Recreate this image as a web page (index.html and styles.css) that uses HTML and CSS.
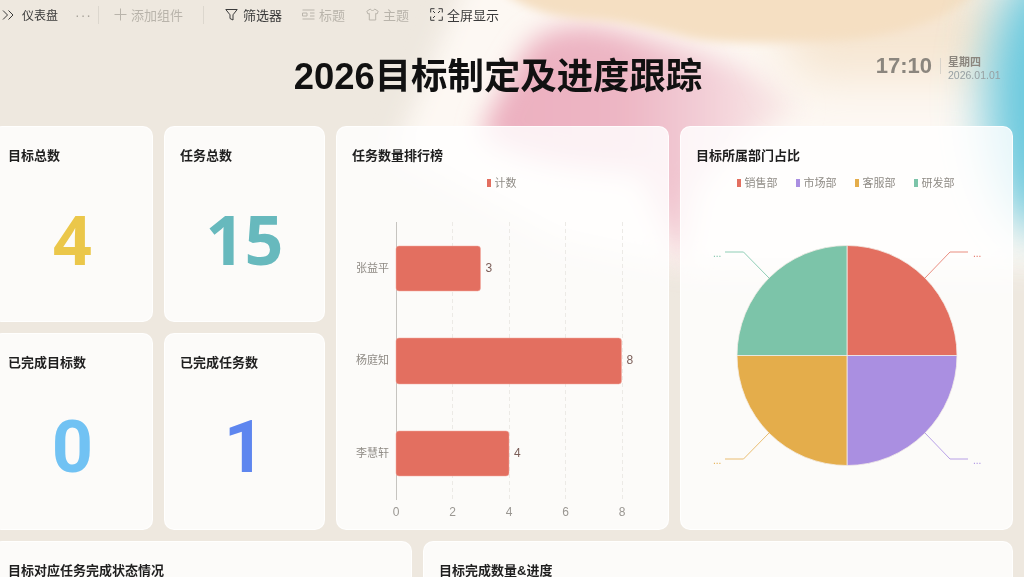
FILE: index.html
```html
<!DOCTYPE html>
<html>

<head>
    <meta name="viewport" content="width=device-width, initial-scale=1">
    <title>2026目标制定及进度跟踪</title>
    <meta charset="UTF-8">
    <link rel="stylesheet" href="styles.css">
</head>

<body>
    <!-- soft colour wash behind the whole page -->
    <svg class="wash" width="1024" height="577" viewBox="0 0 1024 577">
        <defs>
            <filter id="blur_s" x="-30%" y="-30%" width="160%" height="160%">
                <feGaussianBlur stdDeviation="5" />
            </filter>
            <filter id="blur_m" x="-30%" y="-30%" width="160%" height="160%">
                <feGaussianBlur stdDeviation="13" />
            </filter>
            <filter id="blur_l" x="-50%" y="-50%" width="200%" height="200%">
                <feGaussianBlur stdDeviation="24" />
            </filter>
            <linearGradient id="pink_fill" gradientUnits="userSpaceOnUse" x1="480" y1="0" x2="800" y2="0">
                <stop offset="0" stop-color="#ecafbf" />
                <stop offset="0.45" stop-color="#edb6c4" />
                <stop offset="0.72" stop-color="#f3d0d8" />
                <stop offset="1" stop-color="#faeeea" />
            </linearGradient>
        </defs>
        <path fill="#fdf8f3" filter="url(#blur_m)" d="M470 -30H1060V270H700L560 240 395 150Z" />
        <path fill="url(#pink_fill)" filter="url(#blur_m)"
            d="M593 26C560 26 540 30 525 50 510 75 495 100 480 135 520 165 590 170 640 175L682 270 695 195C720 150 770 125 800 110 770 70 700 50 593 26Z" />
        <path fill="#f6e6d2" filter="url(#blur_l)" d="M760 -20H1000V80H800Z" />
        <path fill="#f5dfc2" filter="url(#blur_s)"
            d="M490 -20H985C965 15 900 40 820 41 760 43 725 44 690 38 650 28 625 22 593 20 560 18 520 12 490 -20Z" />
        <ellipse fill="#6ac9de" filter="url(#blur_l)" cx="1048" cy="100" rx="62" ry="135" />
    </svg>

    <div class="toolbar">
        <svg class="tool_icon chevrons" width="12" height="12" viewBox="0 0 12 12">
            <path d="M1 1.500 5.500 6 1 10.500M6.500 1.500 11 6 6.500 10.500" />
        </svg>
        <span class="crumb">仪表盘</span>
        <span class="more">···</span>
        <span class="divider first"></span>
        <span class="tool muted add">
            <svg class="tool_icon" width="13" height="13" viewBox="0 0 13 13">
                <path d="M6.500 0.500V12.500M0.500 6.500H12.500" />
            </svg>
            添加组件
        </span>
        <span class="divider second"></span>
        <span class="tool filter">
            <svg class="tool_icon" width="13" height="13" viewBox="0 0 13 13">
                <path d="M0.800 1.500H12.200L8 6.800V12L5 10.500V6.800Z" />
            </svg>
            筛选器
        </span>
        <span class="tool muted heading">
            <svg class="tool_icon" width="13" height="13" viewBox="0 0 13 13">
                <path d="M0.500 2H12.500M0.500 11H12.500M0.500 5H5V8H0.500ZM8 5H12.500M8 8H12.500" />
            </svg>
            标题
        </span>
        <span class="tool muted theme">
            <svg class="tool_icon" width="13" height="13" viewBox="0 0 13 13">
                <path d="M4.300 1 0.800 3.300 2 6 3.300 5.400V12H9.700V5.400L11 6 12.200 3.300 8.700 1C8 3 5 3 4.300 1Z" />
            </svg>
            主题
        </span>
        <span class="tool fullscreen">
            <svg class="tool_icon" width="13" height="13" viewBox="0 0 13 13">
                <path d="M0.700 4.500V0.700H4.500M8.500 0.700H12.300V4.500M12.300 8.500V12.300H8.500M4.500 12.300H0.700V8.500M3 3 5 5M10 3 8 5M3 10 5 8" />
            </svg>
            全屏显示
        </span>
    </div>

    <div class="page_header">
        <div class="header_side"></div>
        <h1 class="page_title">2026目标制定及进度跟踪</h1>
        <div class="header_side clock">
            <span class="clock_time">17:10</span>
            <span class="clock_date">
                <b>星期四</b>
                <span>2026.01.01</span>
            </span>
        </div>
    </div>

    <div class="board">
        <div class="card">
            <div class="card_title">目标总数</div>
            <div class="stat stat_yellow">4</div>
        </div>
        <div class="card">
            <div class="card_title">任务总数</div>
            <div class="stat stat_teal">15</div>
        </div>

        <div class="card card_tall">
            <div class="card_title">任务数量排行榜</div>
            <div class="legend">
                <span class="legend_item"><i class="mark mark_red"></i>计数</span>
            </div>
            <svg class="chart bar_chart" width="331" height="340" viewBox="0 0 331 340">
                <g class="grid_lines">
                    <path d="M115.500 31V309M172.500 31V309M228.500 31V309M285.500 31V309" />
                </g>
                <path class="axis_line" d="M59.500 31V309" />
                <rect class="bar" x="59" y="55" width="84.500" height="45" rx="3" />
                <rect class="bar" x="59" y="147" width="225.500" height="46" rx="3" />
                <rect class="bar" x="59" y="240" width="113" height="45" rx="3" />
                <g class="cat_labels">
                    <text x="52" y="81">张益平</text>
                    <text x="52" y="173">杨庭知</text>
                    <text x="52" y="266">李慧轩</text>
                </g>
                <g class="val_labels">
                    <text x="148.500" y="81">3</text>
                    <text x="289.500" y="173">8</text>
                    <text x="177" y="266">4</text>
                </g>
                <g class="tick_labels">
                    <text x="59" y="325">0</text>
                    <text x="115.500" y="325">2</text>
                    <text x="172" y="325">4</text>
                    <text x="228.500" y="325">6</text>
                    <text x="285" y="325">8</text>
                </g>
            </svg>
        </div>

        <div class="card card_tall">
            <div class="card_title">目标所属部门占比</div>
            <div class="legend">
                <span class="legend_item"><i class="mark mark_red"></i>销售部</span>
                <span class="legend_item"><i class="mark mark_purple"></i>市场部</span>
                <span class="legend_item"><i class="mark mark_orange"></i>客服部</span>
                <span class="legend_item"><i class="mark mark_green"></i>研发部</span>
            </div>
            <svg class="chart pie_chart" width="331" height="340" viewBox="0 0 331 340">
                <path class="slice" fill="#e36f60" d="M166 54.500A110 110 0 0 1 276 164.500H166Z" />
                <path class="slice" fill="#aa8fe1" d="M276 164.500A110 110 0 0 1 166 274.500V164.500Z" />
                <path class="slice" fill="#e4ad4b" d="M166 274.500A110 110 0 0 1 56 164.500H166Z" />
                <path class="slice" fill="#7cc4a9" d="M56 164.500A110 110 0 0 1 166 54.500V164.500Z" />
                <path class="leader" stroke="#e98d80" d="M244 87 269 61H287" />
                <path class="leader" stroke="#b7a0e6" d="M244 242 269 268H287" />
                <path class="leader" stroke="#e9bd72" d="M88 242 62.500 268H44" />
                <path class="leader" stroke="#8fcdb6" d="M88 87 62.500 61H44" />
                <text class="leader_text" fill="#e36f60" x="292" y="66">...</text>
                <text class="leader_text" fill="#aa8fe1" x="292" y="273">...</text>
                <text class="leader_text" fill="#e4ad4b" x="32" y="273">...</text>
                <text class="leader_text" fill="#7cc4a9" x="32" y="66">...</text>
            </svg>
        </div>

        <div class="card">
            <div class="card_title">已完成目标数</div>
            <div class="stat stat_sky">0</div>
        </div>
        <div class="card">
            <div class="card_title">已完成任务数</div>
            <div class="stat stat_blue">1</div>
        </div>

        <div class="bottom_row">
            <div class="card card_status">
                <div class="card_title">目标对应任务完成状态情况</div>
            </div>
            <div class="card card_progress">
                <div class="card_title">目标完成数量&amp;进度</div>
            </div>
        </div>
    </div>
</body>

</html>
```

FILE: styles.css
```css
html,
body {
    height: 100%;
}

body {
    margin: 0;
    overflow: hidden;
    color: #1b1b1b;
    font-family: "Liberation Sans", "Noto Sans CJK SC", sans-serif;
    background-color: #eee8df;
}

.wash {
    position: fixed;
    top: 0;
    left: 0;
    z-index: -1;
}

/* Toolbar */
.toolbar {
    display: flex;
    align-items: center;
    height: 29px;
    font-size: 13px;
    color: #3a3a3a;
    white-space: nowrap;
}

.tool_icon {
    flex: none;
    fill: none;
    stroke: currentColor;
    stroke-width: 1;
}

.chevrons {
    margin-left: 2px;
}

.crumb {
    margin-left: 8px;
    font-size: 12px;
}

.more {
    margin-left: 17px;
    color: #aaa59c;
    font-size: 14px;
    letter-spacing: 1px;
}

.divider {
    width: 1px;
    height: 18px;
    background-color: #dcd7ce;
}

.divider.first {
    margin-left: 6px;
}

.divider.second {
    margin-left: 20px;
}

.tool {
    display: flex;
    align-items: center;
    gap: 4px;
}

.muted {
    color: #b9b4ab;
}

.add {
    margin-left: 15px;
}

.filter {
    margin-left: 21px;
    gap: 5px;
}

.heading {
    margin-left: 20px;
}

.theme {
    margin-left: 21px;
}

.fullscreen {
    margin-left: 21px;
}

/* Header */
.page_header {
    display: flex;
    align-items: center;
    box-sizing: border-box;
    width: 1021px;
    height: 97px;
    margin-left: -8px;
    padding: 0 12px 2px 3px;
}

.header_side {
    flex: 1;
}

.page_title {
    margin: 0;
    font-size: 36.400px;
    font-weight: bold;
    line-height: 44px;
    color: #111;
    white-space: nowrap;
}

.clock {
    display: flex;
    justify-content: flex-end;
    align-items: center;
    position: relative;
    top: -9px;
    color: #8b867e;
}

.clock_time {
    font-size: 22px;
    font-weight: bold;
    padding-right: 8px;
    border-right: 1px solid #d9d4cb;
    line-height: 16px;
    margin-bottom: 4px;
}

.clock_date {
    display: flex;
    flex-direction: column;
    margin-left: 7px;
    margin-top: 2px;
    width: 53px;
    font-size: 10.500px;
    line-height: 13px;
}

.clock_date b {
    font-size: 11px;
}

.clock_date span {
    color: #97a0a3;
    white-space: nowrap;
}

/* Cards */
.board {
    display: grid;
    grid-template-columns: 161px 161px 333px 333px;
    grid-template-rows: 196px 197px 200px;
    gap: 11px;
    margin-left: -8px;
}

.card {
    display: flex;
    flex-direction: column;
    box-sizing: border-box;
    min-width: 0;
    padding: 21px 15px 0;
    background-color: rgba(255, 255, 255, 0.82);
    border: 1.500px solid rgba(255, 255, 255, 0.8);
    border-radius: 10px;
}

.card_tall {
    grid-row: span 2;
}

.card_title {
    font-size: 13px;
    font-weight: bold;
    line-height: 15px;
    color: #1f1f1f;
}

.stat {
    flex: 1;
    display: flex;
    align-items: center;
    justify-content: center;
    padding-bottom: 8px;
    font-family: "Noto Sans", sans-serif;
    font-size: 68px;
    font-weight: bold;
}

.stat_yellow {
    color: #ebc74a;
}

.stat_teal {
    color: #67b9bd;
}

.stat_sky {
    color: #71c2f3;
    font-family: Roboto, sans-serif;
    font-size: 72px;
    padding-bottom: 4px;
}

.stat_blue {
    color: #5e86ef;
    font-family: Roboto, sans-serif;
    font-size: 72px;
    padding-bottom: 4px;
}

.bottom_row {
    grid-column: 1 / -1;
    display: flex;
    gap: 11px;
}

.card_status {
    width: 420px;
}

.card_progress {
    flex: 1;
}

/* Charts */
.legend {
    display: flex;
    justify-content: center;
    gap: 18px;
    margin-top: 12px;
    margin-right: 2px;
    font-size: 11px;
    line-height: 16px;
    color: #8f8b85;
}

.legend_item {
    display: flex;
    align-items: center;
    gap: 4px;
}

.mark {
    width: 4px;
    height: 8px;
}

.mark_red {
    background-color: #e36f60;
}

.mark_purple {
    background-color: #aa8fe1;
}

.mark_orange {
    background-color: #e4ad4b;
}

.mark_green {
    background-color: #7cc4a9;
}

.chart {
    flex: none;
    margin: 0 -15px;
    font-size: 11px;
}

.grid_lines path {
    fill: none;
    stroke: #eceae6;
    stroke-dasharray: 4 3;
}

.axis_line {
    fill: none;
    stroke: #c6c4c0;
}

.bar {
    fill: #e36f60;
    stroke: #f0a99f;
    stroke-width: 0.500;
}

.cat_labels text {
    fill: #8f8b85;
    text-anchor: end;
}

.val_labels text {
    fill: #7b5e58;
    font-size: 12px;
}

.tick_labels text {
    fill: #9a9792;
    font-size: 12px;
    text-anchor: middle;
}

.slice {
    stroke: #f3ece6;
    stroke-width: 0.800;
}

.leader {
    fill: none;
}

.leader_text {
    font-size: 10px;
}
```
